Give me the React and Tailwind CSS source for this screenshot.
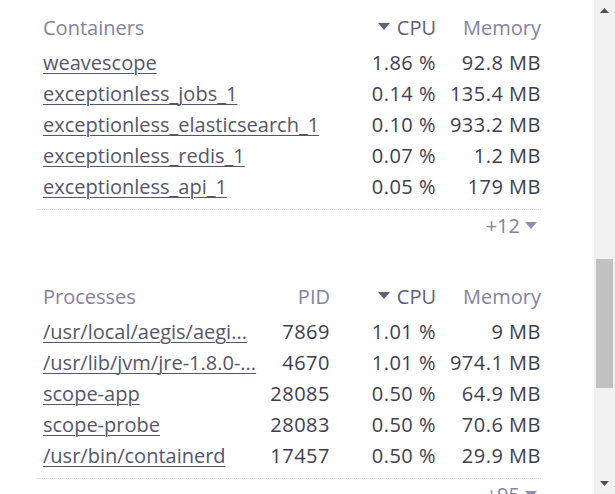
import React from 'react';

const containers = [
  { name: 'weavescope', cpu: '1.86 %', mem: '92.8 MB' },
  { name: 'exceptionless_jobs_1', cpu: '0.14 %', mem: '135.4 MB' },
  { name: 'exceptionless_elasticsearch_1', cpu: '0.10 %', mem: '933.2 MB' },
  { name: 'exceptionless_redis_1', cpu: '0.07 %', mem: '1.2 MB' },
  { name: 'exceptionless_api_1', cpu: '0.05 %', mem: '179 MB' },
];

const processes = [
  { name: '/usr/local/aegis/aegi...', pid: '7869', cpu: '1.01 %', mem: '9 MB' },
  { name: '/usr/lib/jvm/jre-1.8.0-...', pid: '4670', cpu: '1.01 %', mem: '974.1 MB' },
  { name: 'scope-app', pid: '28085', cpu: '0.50 %', mem: '64.9 MB' },
  { name: 'scope-probe', pid: '28083', cpu: '0.50 %', mem: '70.6 MB' },
  { name: '/usr/bin/containerd', pid: '17457', cpu: '0.50 %', mem: '29.9 MB' },
];

function SortArrow() {
  return (
    <svg width="12" height="8" viewBox="0 0 12 8" className="mr-[7px] mb-[2px] inline-block">
      <path d="M0 0 L12 0 L6 7 Z" fill="#5e5e7e" />
    </svg>
  );
}

function Link({ children }) {
  return (
    <span className="underline underline-offset-[3px] decoration-[1px] text-[#55566b] whitespace-nowrap">
      {children}
    </span>
  );
}

function More({ label }) {
  return (
    <div className="flex justify-end items-center pr-[4px] h-[32px] text-[#8283a3]">
      <span>{label}</span>
      <svg width="12" height="8" viewBox="0 0 12 8" className="ml-[5px]">
        <path d="M0 0 L12 0 L6 7 Z" fill="#8e8fb0" />
      </svg>
    </div>
  );
}

export default function App() {
  return (
    <div
      className="flex w-[615px] h-[494px] overflow-hidden bg-white text-[20px]"
      style={{ fontFamily: '"Open Sans", Lato, sans-serif' }}
    >
      <div className="flex-1 min-w-0 pl-[37px] pr-[53px] pt-[9px]">
        {/* Containers */}
        <div className="flex items-center h-[38px] pl-[6px] text-[#8283a3]">
          <div className="flex-1">Containers</div>
          <div className="w-[100px] text-right text-[#5e5e7e] flex items-center justify-end">
            <SortArrow />CPU
          </div>
          <div className="w-[105px] text-right">Memory</div>
        </div>
        {containers.map((r) => (
          <div key={r.name} className="flex items-center h-[31px] pl-[6px] text-[#3d3e52]">
            <div className="flex-1 min-w-0"><Link>{r.name}</Link></div>
            <div className="w-[100px] text-right tracking-[0.5px]">{r.cpu}</div>
            <div className="w-[105px] text-right tracking-[0.5px]">{r.mem}</div>
          </div>
        ))}
        <div className="mt-[7px] border-t border-dotted border-[#d6d6de]" />
        <More label="+12" />

        {/* Processes */}
        <div className="mt-[36px] flex items-center h-[38px] pl-[6px] text-[#8283a3]">
          <div className="flex-1">Processes</div>
          <div className="w-[80px] text-right">PID</div>
          <div className="w-[106px] text-right text-[#5e5e7e] flex items-center justify-end">
            <SortArrow />CPU
          </div>
          <div className="w-[105px] text-right">Memory</div>
        </div>
        {processes.map((r) => (
          <div key={r.name} className="flex items-center h-[31px] pl-[6px] text-[#3d3e52]">
            <div className="flex-1 min-w-0"><Link>{r.name}</Link></div>
            <div className="w-[80px] shrink-0 text-right tracking-[0.5px]">{r.pid}</div>
            <div className="w-[106px] shrink-0 text-right tracking-[0.5px]">{r.cpu}</div>
            <div className="w-[105px] shrink-0 text-right tracking-[0.5px]">{r.mem}</div>
          </div>
        ))}
        <div className="mt-[7px] border-t border-dotted border-[#d6d6de]" />
        <More label="+95" />
      </div>

      {/* scrollbar */}
      <div className="w-[21px] shrink-0 bg-[#f1f1f1] flex flex-col items-center">
        <div className="h-[21px] flex items-center justify-center">
          <svg width="9" height="5" viewBox="0 0 9 5"><path d="M0 5 L9 5 L4.5 0 Z" fill="#505050" /></svg>
        </div>
        <div className="mt-[238px] w-[17px] h-[129px] bg-[#c1c1c1]" />
        <div className="flex-1" />
        <div className="h-[21px] flex items-center justify-center">
          <svg width="9" height="5" viewBox="0 0 9 5"><path d="M0 0 L9 0 L4.5 5 Z" fill="#505050" /></svg>
        </div>
      </div>
    </div>
  );
}
